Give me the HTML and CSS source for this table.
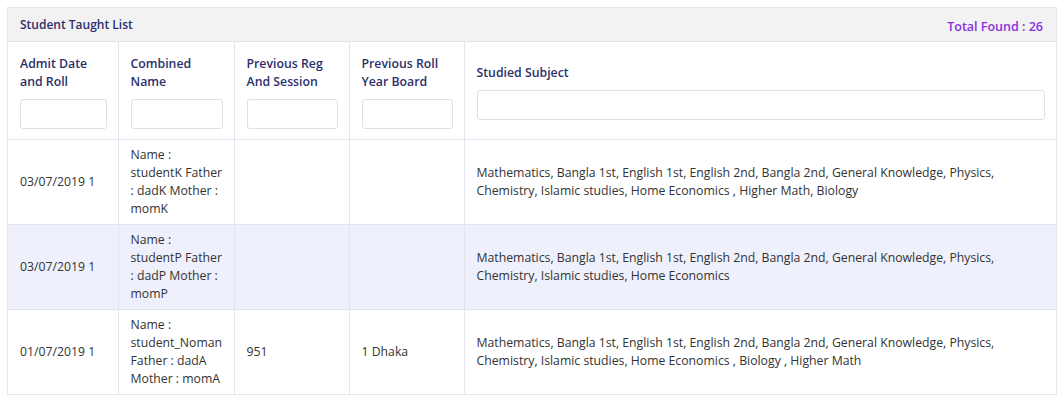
FILE: index.html
```html
<!DOCTYPE html>
<html>
<head>
<meta charset="utf-8">
<link rel="stylesheet" href="styles.css">
</head>
<body>
<div class="card">
  <div class="card-head">
    <span class="title">Student Taught List</span>
    <span class="total">Total Found : 26</span>
  </div>
  <table class="list">
    <colgroup>
      <col class="c1"><col class="c2"><col class="c3"><col class="c4"><col class="c5">
    </colgroup>
    <thead>
      <tr>
        <th><div class="th-label">Admit Date and Roll</div><input class="filter" type="text"></th>
        <th><div class="th-label">Combined Name</div><input class="filter" type="text"></th>
        <th><div class="th-label">Previous Reg And Session</div><input class="filter" type="text"></th>
        <th><div class="th-label">Previous Roll Year Board</div><input class="filter" type="text"></th>
        <th><div class="th-label">Studied Subject</div><input class="filter" type="text"></th>
      </tr>
    </thead>
    <tbody>
      <tr>
        <td>03/07/2019 1</td>
        <td>Name : studentK Father : dadK Mother : momK</td>
        <td></td>
        <td></td>
        <td>Mathematics, Bangla 1st, English 1st, English 2nd, Bangla 2nd, General Knowledge, Physics, Chemistry, Islamic studies, Home Economics , Higher Math, Biology</td>
      </tr>
      <tr>
        <td>03/07/2019 1</td>
        <td>Name : studentP Father : dadP Mother : momP</td>
        <td></td>
        <td></td>
        <td>Mathematics, Bangla 1st, English 1st, English 2nd, Bangla 2nd, General Knowledge, Physics, Chemistry, Islamic studies, Home Economics</td>
      </tr>
      <tr>
        <td>01/07/2019 1</td>
        <td>Name : student_Noman Father : dadA Mother : momA</td>
        <td>951</td>
        <td>1 Dhaka</td>
        <td>Mathematics, Bangla 1st, English 1st, English 2nd, Bangla 2nd, General Knowledge, Physics, Chemistry, Islamic studies, Home Economics , Biology , Higher Math</td>
      </tr>
    </tbody>
  </table>
</div>
</body>
</html>
```

FILE: styles.css
```css
html, body {
  margin: 0;
  padding: 0;
  background: #ffffff;
}
body {
  padding: 7px 7px 0 7px;
  font-family: "Open Sans", "Noto Sans", sans-serif;
  color: #333333;
}
.card {
  border: 1px solid #e4e4ee;
  border-bottom: none;
  background: #ffffff;
}
.card-head {
  display: flex;
  justify-content: space-between;
  align-items: center;
  height: 33px;
  padding: 0 13px 0 12px;
  background: #f2f2f3;
  border-bottom: 1px solid #e4e4ee;
  font-weight: 600;
}
.title {
  color: #2c2f6b;
  font-size: 12px;
}
.total {
  color: #8a2fe0;
  font-size: 12.5px;
  margin-top: 4px;
}
.list {
  width: 100%;
  border-collapse: collapse;
  table-layout: fixed;
}
.c1 { width: 110px; }
.c2 { width: 116px; }
.c3 { width: 115px; }
.c4 { width: 115px; }
.list th, .list td {
  border: 1px solid #e4e4ee;
  text-align: left;
  vertical-align: middle;
}
.list tr > :first-child { border-left: none; }
.list tr > :last-child { border-right: none; }
.list thead tr > * { border-top: none; }
.list th {
  padding: 13px 11px 10px 12px;
  font-weight: 600;
  font-size: 12.3px;
  line-height: 18px;
  color: #2c2f6b;
}
.th-label {
  margin-bottom: 8px;
}
.filter {
  display: block;
  box-sizing: border-box;
  width: 100%;
  height: 30px;
  border: 1px solid #dedfea;
  border-radius: 3px;
  background: #ffffff;
  margin: 0;
}
.list td {
  padding: 6px 9px 6px 12px;
  font-size: 12.25px;
  line-height: 18px;
  color: #333333;
  height: 72px;
}
.list tbody tr:nth-child(even) td {
  background: #eef0fb;
}
```
